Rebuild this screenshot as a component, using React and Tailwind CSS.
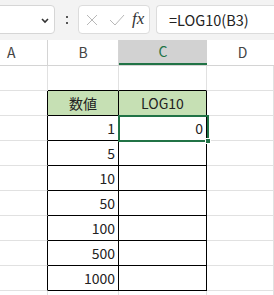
import React from "react";

const GRID = "#e1e1e1";

function Cell({ w, right = GRID, bottom = GRID, bg, align = "right", children, extra = "" }) {
  const justify = align === "center" ? "justify-center" : "justify-end pr-[3px]";
  return (
    <div
      className={`h-full flex items-center shrink-0 border-r border-b ${justify} ${extra}`}
      style={{ width: w, borderRightColor: right, borderBottomColor: bottom, background: bg }}
    >
      {children}
    </div>
  );
}

const COLS = [48, 71, 88, 67];

export default function App() {
  const nums = ["1", "5", "10", "50", "100", "500", "1000"];
  return (
    <div className="relative w-[274px] h-[295px] overflow-hidden bg-white text-[#222] font-['Noto_Sans_CJK_JP','Noto_Sans',sans-serif]">
      {/* Formula bar */}
      <div className="h-[40px] bg-[#f3f3f3] flex items-start pt-[5px]">
        <div className="-ml-[10px] w-[65px] h-[29px] bg-white border border-[#d6d6d6] rounded-[4px] flex items-center justify-end pr-[4px]">
          <svg width="10" height="10" viewBox="0 0 10 10">
            <path d="M2 4 L5 7 L8 4" fill="none" stroke="#333" strokeWidth="1.6" />
          </svg>
        </div>
        <div className="w-[23px] h-[29px] flex flex-col items-center justify-center gap-[4px]">
          <div className="w-[2px] h-[2px] bg-[#555]" />
          <div className="w-[2px] h-[2px] bg-[#555]" />
        </div>
        <div className="w-[72px] h-[29px] bg-white border border-[#dcdcdc] rounded-[4px] flex items-center pl-[5px]">
          <svg width="14" height="14" viewBox="0 0 14 14" className="ml-[1px]">
            <path d="M2 2 L12 12 M12 2 L2 12" stroke="#b8b8b8" strokeWidth="1" fill="none" />
          </svg>
          <svg width="16" height="14" viewBox="0 0 16 14" className="ml-[10px]">
            <path d="M1 7 L6 12 L15 2" stroke="#b8b8b8" strokeWidth="1" fill="none" />
          </svg>
          <span className="ml-[7px] text-[17px] leading-none italic text-[#333] font-['Liberation_Serif',serif] -mt-[3px]">fx</span>
        </div>
        <div className="ml-[6px] flex-1 h-[29px] bg-white border border-[#dcdcdc] rounded-l-[4px] border-r-0 flex items-center pl-[12px] text-[14.5px] text-[#222]">
          =LOG10(B3)
        </div>
      </div>

      {/* Column headers */}
      <div className="h-[26px] flex bg-white border-b border-[#d4d4d4] text-[14px] text-[#444]">
        <div className="w-[48px] h-full flex items-center pl-[7px] border-r border-[#d4d4d4]">A</div>
        <div className="w-[71px] h-full flex items-center justify-center border-r border-[#d4d4d4]">B</div>
        <div className="w-[88px] h-full flex items-center justify-center bg-[#d2d2d2] text-[#217346] border-b-2 border-[#217346]">C</div>
        <div className="w-[67px] h-full flex items-center justify-center pl-[4px]">D</div>
      </div>

      {/* Row 1 */}
      <div className="h-[25px] flex text-[14px]">
        <Cell w={COLS[0]} />
        <Cell w={COLS[1]} bottom="#000" />
        <Cell w={COLS[2]} bottom="#000" />
        <Cell w={COLS[3]} />
      </div>

      {/* Row 2 header */}
      <div className="h-[25px] flex text-[14px]">
        <Cell w={COLS[0]} right="#000" />
        <Cell w={COLS[1]} right="#000" bottom="#000" bg="#c6e0b4" align="center">数値</Cell>
        <Cell w={COLS[2]} right="#000" bottom="#000" bg="#c6e0b4" align="center">LOG10</Cell>
        <Cell w={COLS[3]} />
      </div>

      {nums.map((n, i) => (
        <div key={n} className="h-[25px] flex text-[14px]">
          <Cell w={COLS[0]} right="#000" />
          <Cell w={COLS[1]} right="#000" bottom="#000">{n}</Cell>
          <Cell w={COLS[2]} right="#000" bottom="#000">{i === 0 ? "0" : null}</Cell>
          <Cell w={COLS[3]} />
        </div>
      ))}

      <div className="h-[25px] flex">
        <Cell w={COLS[0]} />
        <Cell w={COLS[1]} />
        <Cell w={COLS[2]} />
        <Cell w={COLS[3]} />
      </div>

      {/* Selection */}
      <div className="absolute left-[118px] top-[115px] w-[91px] h-[27px] border-2 border-[#217346] pointer-events-none" />
      <div className="absolute left-[205px] top-[138px] w-[6px] h-[6px] bg-[#217346] border border-white" />
    </div>
  );
}
